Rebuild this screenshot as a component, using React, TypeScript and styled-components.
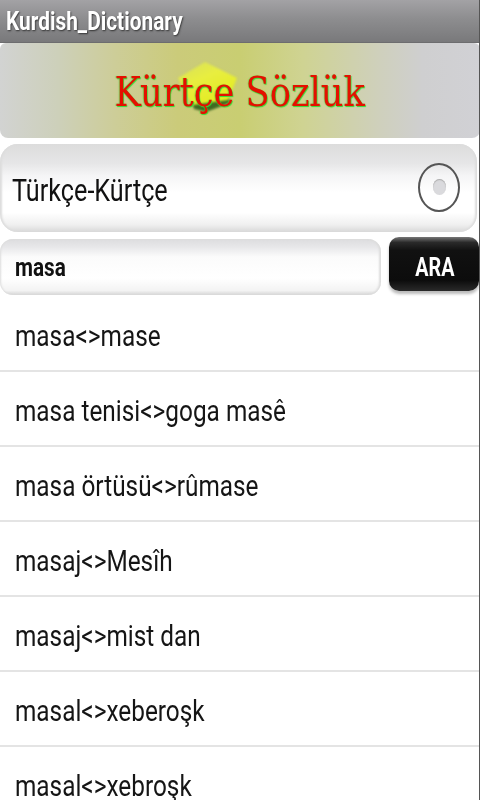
import * as React from 'react'
import styled, { createGlobalStyle } from 'styled-components'

const GlobalStyle = createGlobalStyle`
  html, body {
    margin: 0;
    padding: 0;
    background: #fff;
    overflow: hidden;
  }
  * {
    box-sizing: border-box;
  }
`

const Screen = styled.div`
  width: 480px;
  height: 800px;
  overflow: hidden;
  display: flex;
  flex-direction: column;
  font-family: Roboto, "Liberation Sans", sans-serif;
  background: #fff;
  border-right: 1px solid #555;
`

const TitleBar = styled.div`
  height: 43px;
  flex: none;
  margin-right: -1px;
  padding: 2px 0 0 6px;
  display: flex;
  align-items: center;
  background: linear-gradient(#a3a2a5, #8d8d8f 45%, #79797b);
  border-bottom: 1px solid #6d6d6f;
`

const Squeezed = styled.span<{ $x: number; $y?: number }>`
  display: inline-block;
  white-space: pre;
  line-height: 1.3;
  transform: scale(${p => p.$x}, ${p => p.$y ?? 1});
  transform-origin: left center;
`

const TitleText = styled(Squeezed)`
  font-size: 25px;
  font-weight: 700;
  color: #fff;
  text-shadow: 1px 1px 2px #333;
`

const Banner = styled.div`
  height: 95px;
  flex: none;
  margin-right: -1px;
  border-radius: 6px 6px 8px 8px;
  display: flex;
  align-items: center;
  justify-content: center;
  position: relative;
  background: linear-gradient(
    90deg,
    #d2d3d2 0%,
    #cdd0ba 12%,
    #cdcd98 24%,
    #cbcb7a 37%,
    #c9ce72 50%,
    #cfd392 63%,
    #cfd0bc 79%,
    #cfcfd0 88%,
    #d1d1d5 100%
  );
`

const BannerText = styled.span`
  position: relative;
  top: 1px;
  font-family: "DejaVu Serif", "Liberation Serif", serif;
  font-size: 41px;
  color: #e41000;
  white-space: pre;
  text-shadow: 1px 1px 1px #35dc35, -1px 0 1px rgba(50, 220, 50, 0.5);
  transform: scaleX(0.86);
`

const Cube = styled.svg`
  position: absolute;
  left: 176px;
  top: 18px;
  width: 62px;
  height: 52px;
  filter: blur(0.8px);
`

const ModeCard = styled.div`
  height: 88px;
  flex: none;
  margin: 6px 2px 0 0;
  padding: 0 17px 0 12px;
  display: flex;
  align-items: center;
  justify-content: space-between;
  border-radius: 18px;
  background: linear-gradient(#dcdcdc 0%, #e6e6e7 22%, #f5f5f6 36%, #fff 55%, #fff 78%, #efefef 92%, #d8d8d8 100%);
  box-shadow: inset 2px 0 2px #ddd, inset -2px 0 2px #ddd;
`

const ModeLabel = styled(Squeezed)`
  margin-top: 4px;
  font-size: 30px;
  color: #111;
`

const RadioRing = styled.div`
  width: 42px;
  height: 49px;
  margin-bottom: 2px;
  border-radius: 50%;
  border: 2px solid #555;
  display: flex;
  align-items: center;
  justify-content: center;
`

const RadioDot = styled.div`
  width: 13px;
  height: 16px;
  border-radius: 50%;
  background: #dadadd;
  box-shadow: inset 0 1px 1px #aaa;
`

const SearchRow = styled.div`
  height: 58px;
  flex: none;
  margin-top: 7px;
  display: flex;
  gap: 8px;
`

const SearchBox = styled.div`
  width: 381px;
  height: 56px;
  padding: 3px 0 0 15px;
  display: flex;
  align-items: center;
  border-radius: 13px;
  background: linear-gradient(#dcdcde 0%, #e8e8ea 15%, #fbfbfb 32%, #fff 70%, #f3f3f3 92%, #d5d5d5 100%);
  box-shadow: inset 1px 0 2px #ddd, inset -2px 0 2px #ddd;
`

const SearchText = styled(Squeezed)`
  font-size: 25px;
  font-weight: 700;
  color: #111;
`

const SearchButton = styled.div`
  width: 90px;
  height: 54px;
  flex: none;
  margin-top: -2px;
  padding: 6px 0 0 2px;
  display: flex;
  align-items: center;
  justify-content: center;
  border-radius: 10px;
  background: linear-gradient(#777 0%, #2a2a2a 10%, #111 25%, #0c0c0c 80%, #2a2a2a 100%);
  box-shadow: 0 3px 3px #bbb;
`

const ButtonText = styled.span`
  font-size: 25px;
  font-weight: 700;
  color: #fff;
  transform: scaleX(0.79);
`

const WordList = styled.div`
  display: flex;
  flex-direction: column;
`

const WordRow = styled.div`
  height: 75px;
  flex: none;
  padding: 6px 0 0 15px;
  display: flex;
  align-items: center;
  border-bottom: 2px solid #e4e4e4;
`

const WordText = styled(Squeezed)`
  font-size: 29px;
  color: #151515;
`

const words = [
  'masa<>mase',
  'masa tenisi<>goga masê',
  'masa örtüsü<>rûmase',
  'masaj<>Mesîh',
  'masaj<>mist dan',
  'masal<>xeberoşk',
  'masal<>xebroşk',
]

const App = () => (
  <Screen>
    <GlobalStyle />
    <TitleBar>
      <TitleText $x={0.835}>Kurdish_Dictionary</TitleText>
    </TitleBar>
    <Banner>
      <Cube viewBox="0 0 62 52">
        <defs>
          <linearGradient id="top" x1="0" y1="0" x2="0.6" y2="1">
            <stop offset="0" stopColor="#d6de60" />
            <stop offset="0.45" stopColor="#e8ee40" />
            <stop offset="1" stopColor="#e4ec20" />
          </linearGradient>
        </defs>
        <path d="M16 42 L53 36 L54 42 L30 51 L18 48 Z" fill="#3f6a22" />
        <path d="M2 17 L29 1 L61 17 L52 39 L16 44 Z" fill="url(#top)" />
      </Cube>
      <BannerText>Kürtçe Sözlük</BannerText>
    </Banner>
    <ModeCard>
      <ModeLabel $x={0.84} $y={1.04}>Türkçe-Kürtçe</ModeLabel>
      <RadioRing>
        <RadioDot />
      </RadioRing>
    </ModeCard>
    <SearchRow>
      <SearchBox>
        <SearchText $x={0.83}>masa</SearchText>
      </SearchBox>
      <SearchButton>
        <ButtonText>ARA</ButtonText>
      </SearchButton>
    </SearchRow>
    <WordList>
      {words.map(w => (
        <WordRow key={w}>
          <WordText $x={0.84} $y={1.04}>{w}</WordText>
        </WordRow>
      ))}
    </WordList>
  </Screen>
)

export default App
